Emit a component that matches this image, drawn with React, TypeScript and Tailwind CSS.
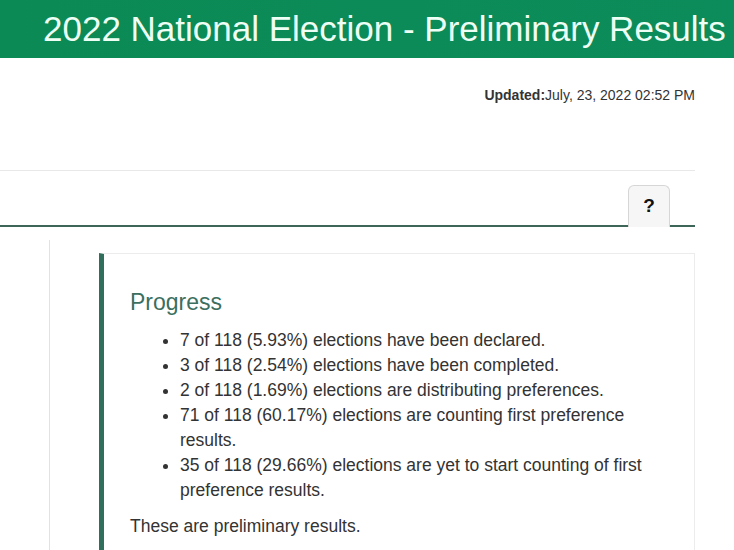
const progress = [
  '7 of 118 (5.93%) elections have been declared.',
  '3 of 118 (2.54%) elections have been completed.',
  '2 of 118 (1.69%) elections are distributing preferences.',
  '71 of 118 (60.17%) elections are counting first preference results.',
  '35 of 118 (29.66%) elections are yet to start counting of first preference results.',
]

export default function App() {
  return (
    <div className="min-h-[550px] bg-white font-['Liberation_Sans',Arial,sans-serif] text-[#333]">
      <header className="h-[58px] bg-gradient-to-r from-[#0b8a55] to-[#0c8c5a] pl-[43px] pt-[9px]">
        <h1 className="text-[35px] leading-[40px] text-[#eefff5] whitespace-nowrap">
          2022 National Election - Preliminary Results
        </h1>
      </header>

      <div className="w-[695px]">
        <div className="flex justify-end pt-[28px] text-[14px] leading-[18px] text-[#333]">
          <span className="font-bold">Updated:</span>
          <span>July, 23, 2022 02:52 PM</span>
        </div>

        <div className="mt-[66px] border-t border-[#e8e8e8]" />

        <div className="flex justify-end border-b-2 border-[#3d6658] pt-[14px] pr-[25px]">
          <button className="-mb-[2px] flex h-[42px] w-[42px] items-center justify-center rounded-t-[6px] border border-b-0 border-[#d6d6d6] bg-[#f6f6f6] text-[19px] font-bold text-[#111]">
            ?
          </button>
        </div>

        <div className="flex">
          <div className="min-h-[320px] w-[50px] shrink-0 border-r border-[#e2e2e2] mt-[13px]" />
          <div className="flex-1 pl-[49px] pt-[26px]">
            <div className="border border-l-[5px] border-[#ececec] border-l-[#2f6f5b] pl-[26px] pr-[20px] pt-[34px] pb-[20px]">
              <h2 className="text-[23px] leading-[28px] text-[#3b6f5f]">Progress</h2>
              <ul className="mt-[12px] list-disc pl-[50px] text-[17.5px] leading-[25px] text-[#333]">
                {progress.map((p) => (
                  <li key={p}>{p}</li>
                ))}
              </ul>
              <p className="mt-[11px] text-[17.5px] leading-[25px] text-[#333]">These are preliminary results.</p>
            </div>
          </div>
        </div>
      </div>
    </div>
  )
}
